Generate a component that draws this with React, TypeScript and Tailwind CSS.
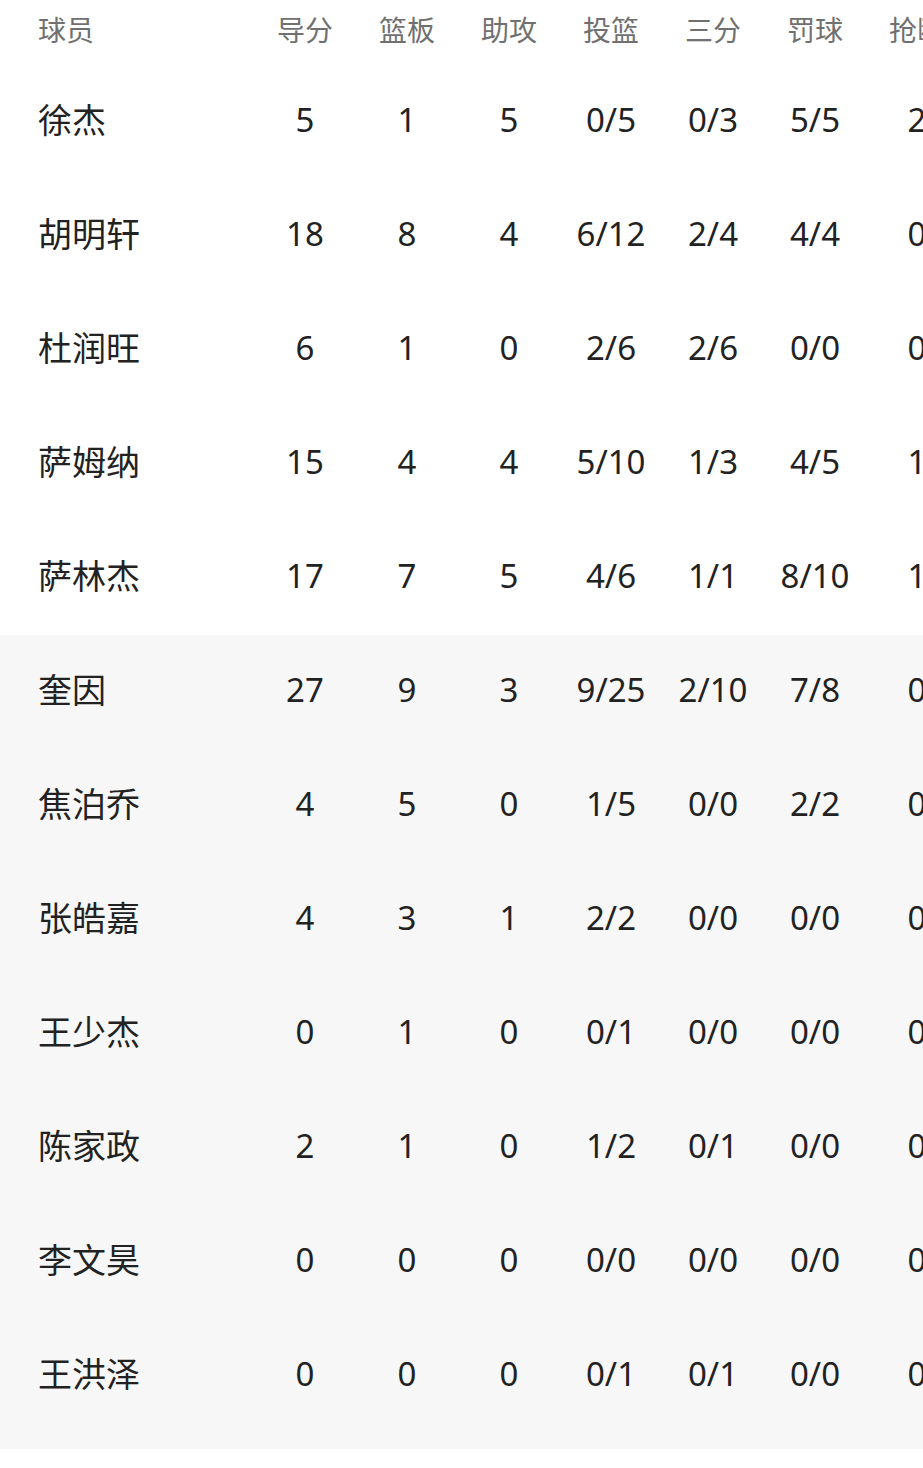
import React from "react";

const cols = ["导分", "篮板", "助攻", "投篮", "三分", "罚球", "抢断"];

const starters: [string, string[]][] = [
  ["徐杰", ["5", "1", "5", "0/5", "0/3", "5/5", "2"]],
  ["胡明轩", ["18", "8", "4", "6/12", "2/4", "4/4", "0"]],
  ["杜润旺", ["6", "1", "0", "2/6", "2/6", "0/0", "0"]],
  ["萨姆纳", ["15", "4", "4", "5/10", "1/3", "4/5", "1"]],
  ["萨林杰", ["17", "7", "5", "4/6", "1/1", "8/10", "1"]],
];

const bench: [string, string[]][] = [
  ["奎因", ["27", "9", "3", "9/25", "2/10", "7/8", "0"]],
  ["焦泊乔", ["4", "5", "0", "1/5", "0/0", "2/2", "0"]],
  ["张皓嘉", ["4", "3", "1", "2/2", "0/0", "0/0", "0"]],
  ["王少杰", ["0", "1", "0", "0/1", "0/0", "0/0", "0"]],
  ["陈家政", ["2", "1", "0", "1/2", "0/1", "0/0", "0"]],
  ["李文昊", ["0", "0", "0", "0/0", "0/0", "0/0", "0"]],
  ["王洪泽", ["0", "0", "0", "0/1", "0/1", "0/0", "0"]],
];

function Row({ name, stats }: { name: string; stats: string[] }) {
  return (
    <div className="flex h-[114px] items-center pb-[4px]">
      <div className="w-[254px] shrink-0 pl-[38px] text-[34px] text-[#222222]">{name}</div>
      {stats.map((s, i) => (
        <div key={i} className="w-[102px] shrink-0 text-center text-[33px] text-[#222222]">
          {s}
        </div>
      ))}
    </div>
  );
}

export default function App() {
  return (
    <div
      className="w-[923px] h-[1468px] overflow-hidden bg-white"
      style={{ fontFamily: '"Noto Sans", "Noto Sans CJK SC", sans-serif' }}
    >
      <div className="flex h-[65px] items-center pb-[6px]">
        <div className="w-[254px] shrink-0 pl-[38px] text-[28px] text-[#707070]">球员</div>
        {cols.map((c) => (
          <div key={c} className="w-[102px] shrink-0 text-center text-[28px] text-[#707070] whitespace-nowrap">
            {c}
          </div>
        ))}
      </div>
      <div>
        {starters.map(([n, s]) => (
          <Row key={n} name={n} stats={s} />
        ))}
      </div>
      <div className="bg-[#f7f7f7] pb-[16px]">
        {bench.map(([n, s]) => (
          <Row key={n} name={n} stats={s} />
        ))}
      </div>
    </div>
  );
}
